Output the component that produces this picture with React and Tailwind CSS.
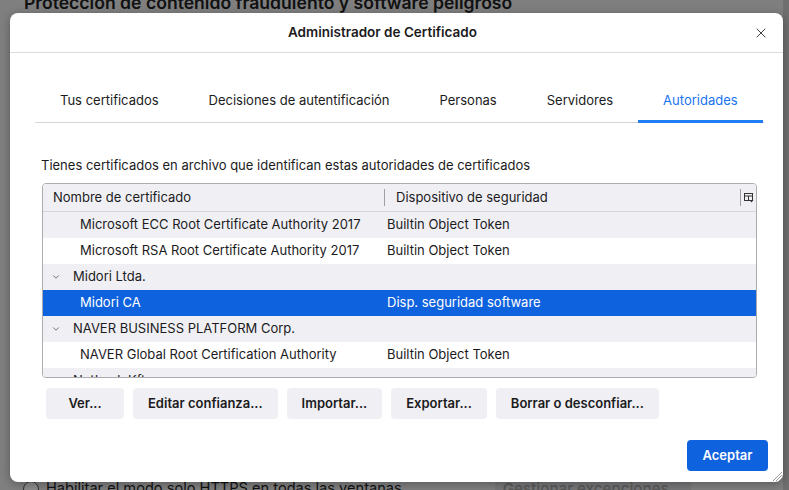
import { ChevronDown, X } from 'lucide-react';

const TABS = ['Tus certificados', 'Decisiones de autentificación', 'Personas', 'Servidores', 'Autoridades'];

const ROWS = [
  { name: 'Microsoft ECC Root Certificate Authority 2017', device: 'Builtin Object Token' },
  { name: 'Microsoft RSA Root Certificate Authority 2017', device: 'Builtin Object Token' },
  { name: 'Midori Ltda.', group: true },
  { name: 'Midori CA', device: 'Disp. seguridad software', selected: true },
  { name: 'NAVER BUSINESS PLATFORM Corp.', group: true },
  { name: 'NAVER Global Root Certification Authority', device: 'Builtin Object Token' },
  { name: 'NetLock Kft.', group: true },
];

const BUTTONS = ['Ver...', 'Editar confianza...', 'Importar...', 'Exportar...', 'Borrar o desconfiar...'];

const ColumnPicker = () => (
  <svg width="10" height="10" viewBox="0 0 10 10" fill="none" stroke="#333" strokeWidth="1">
    <rect x="0.5" y="0.5" width="8" height="7" />
    <path d="M0.5 3h8M4.5 3v4.5" />
    <path d="M5.5 7h4l-2 2.5z" fill="#333" stroke="none" />
  </svg>
);

const Row = ({ row, index }) => {
  const bg = row.selected ? 'bg-[#0f62dd] text-white' : index % 2 === 0 ? 'bg-[#f0f0f4]' : 'bg-white';
  return (
    <div className={`flex h-[26px] shrink-0 items-center ${bg}`}>
      <div className="flex w-[341px] shrink-0 items-center">
        {row.group ? (
          <>
            <ChevronDown size={10} strokeWidth={1.8} className="ml-[8px] mr-[12px] text-[#444]" />
            <span className="truncate">{row.name}</span>
          </>
        ) : (
          <span className="truncate pl-[37px]">{row.name}</span>
        )}
      </div>
      <div className="pl-[3px]">{row.device}</div>
    </div>
  );
};

export default function App() {
  return (
    <div
      className="relative h-[490px] w-[789px] overflow-hidden bg-[#7f7f80] text-[#1b1b1d]"
      style={{ fontFamily: 'Inter, "Noto Sans", sans-serif' }}
    >
      {/* Page behind the modal */}
      <div className="flex h-full flex-col">
        <div className="-mt-[9px] whitespace-nowrap pl-[24px] text-[17.6px] font-semibold leading-[24px] text-[#111]">
          Protección de contenido fraudulento y software peligroso
        </div>
        <div className="flex-1" />
        <div className="-mb-[10px] flex items-center whitespace-nowrap pl-[23px]">
          <div className="h-[16px] w-[16px] rounded-full border border-[#333] bg-[#8a8a8a]" />
          <span className="ml-[7px] text-[14.6px] text-[#111]">Habilitar el modo solo HTTPS en todas las ventanas</span>
          <div className="ml-[93px] rounded-[4px] bg-[#777779] px-[8px] text-[15px] font-semibold text-[#5a5a5a]">
            Gestionar excepciones...
          </div>
        </div>
      </div>
      <div className="absolute right-0 top-0 h-full w-[6px] bg-[#6f6f70]" />

      {/* Dialog */}
      <div className="absolute left-[10px] top-[13px] flex h-[469px] w-[773px] flex-col rounded-[8px] bg-white text-[13px] shadow-[0_2px_10px_rgba(0,0,0,0.3)]">
        <div className="flex h-[40px] shrink-0 items-center border-b border-[#dcdce0] pl-[16px]">
          <div className="flex-1 text-center text-[13.5px] font-semibold">Administrador de Certificado</div>
          <div className="flex w-[44px] items-center justify-center">
            <X size={16} strokeWidth={1.3} className="text-[#222]" />
          </div>
        </div>

        <div className="ml-[25px] mr-[19px] mt-[26px] flex border-b border-[#d4d4d9]">
          {TABS.map((t) => (
            <div
              key={t}
              className={`-mb-px flex h-[44px] shrink-0 items-center whitespace-nowrap px-[25px] ${
                t === 'Autoridades' ? 'border-b-[3px] border-[#1f7ef3] pt-[3px] text-[#1a73f0]' : ''
              }`}
            >
              {t}
            </div>
          ))}
        </div>

        <div className="ml-[31px] mt-[34px] leading-[16px]">
          Tienes certificados en archivo que identifican estas autoridades de certificados
        </div>

        <div className="ml-[32px] mt-[10px] flex h-[195px] w-[715px] flex-col overflow-hidden rounded-[4px] border border-[#acacb0]">
          <div className="flex h-[28px] shrink-0 items-center border-b border-[#d6d6da] bg-[#f0f0f4]">
            <div className="w-[341px] shrink-0 pl-[10px]">Nombre de certificado</div>
            <div className="h-[17px] w-px bg-[#a0a0a4]" />
            <div className="flex-1 pl-[11px]">Dispositivo de seguridad</div>
            <div className="h-[17px] w-px bg-[#a0a0a4]" />
            <div className="flex w-[15px] justify-center">
              <ColumnPicker />
            </div>
          </div>
          {ROWS.map((r, i) => (
            <Row key={r.name} row={r} index={i} />
          ))}
        </div>

        <div className="ml-[36px] mt-[10px] flex gap-[9px]">
          {BUTTONS.map((b) => (
            <button
              key={b}
              className="h-[31px] min-w-[78px] rounded-[4px] bg-[#f0f0f4] px-[15px] font-semibold text-[#1b1b1d]"
            >
              {b}
            </button>
          ))}
        </div>

        <div className="flex-1" />
        <div className="mb-[11px] mr-[15px] flex justify-end">
          <button className="h-[31px] w-[81px] rounded-[4px] bg-[#0f62dd] font-semibold text-white">Aceptar</button>
        </div>

        <svg className="absolute bottom-[1px] right-[1px]" width="10" height="10" viewBox="0 0 10 10" stroke="#999" strokeWidth="1">
          <path d="M10 1L1 10M10 4L4 10M10 7L7 10" />
        </svg>
      </div>
    </div>
  );
}
